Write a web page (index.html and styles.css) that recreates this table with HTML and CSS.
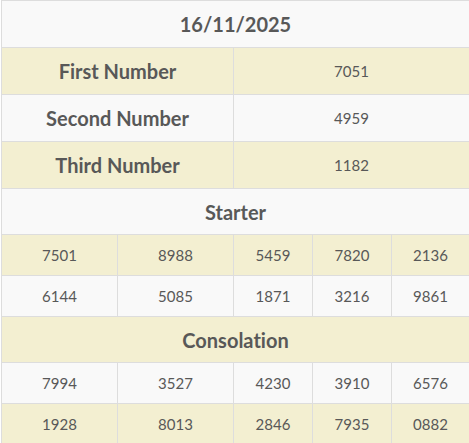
FILE: index.html
```html
<!DOCTYPE html>
<html>
<head>
<meta charset="utf-8">
<link rel="stylesheet" href="styles.css">
</head>
<body>
<div class="results">
  <div class="cell title span5 white">16/11/2025</div>

  <div class="cell label span2 beige">First Number</div>
  <div class="cell value span3 beige">7051</div>

  <div class="cell label span2 white">Second Number</div>
  <div class="cell value span3 white">4959</div>

  <div class="cell label span2 beige">Third Number</div>
  <div class="cell value span3 beige">1182</div>

  <div class="cell section span5 white">Starter</div>

  <div class="cell num beige">7501</div>
  <div class="cell num beige">8988</div>
  <div class="cell num beige">5459</div>
  <div class="cell num beige">7820</div>
  <div class="cell num beige">2136</div>

  <div class="cell num white">6144</div>
  <div class="cell num white">5085</div>
  <div class="cell num white">1871</div>
  <div class="cell num white">3216</div>
  <div class="cell num white">9861</div>

  <div class="cell section span5 beige">Consolation</div>

  <div class="cell num white">7994</div>
  <div class="cell num white">3527</div>
  <div class="cell num white">4230</div>
  <div class="cell num white">3910</div>
  <div class="cell num white">6576</div>

  <div class="cell num beige">1928</div>
  <div class="cell num beige">8013</div>
  <div class="cell num beige">2846</div>
  <div class="cell num beige">7935</div>
  <div class="cell num beige">0882</div>
</div>
</body>
</html>
```
FILE: styles.css
```css
html, body {
  margin: 0;
  padding: 0;
  background: #ffffff;
  overflow: hidden;
}

body {
  font-family: Lato, "Open Sans", sans-serif;
  color: #585858;
  font-variant-ligatures: none;
}

.results {
  display: grid;
  grid-template-columns: 116px 116px 79px 79px 78px;
  margin-left: 1px;
  width: 469px;
  border-left: 1px solid #dddddd;
  border-top: 1px solid #dddddd;
  box-sizing: border-box;
}

.cell {
  box-sizing: border-box;
  border-right: 1px solid #dddddd;
  border-bottom: 1px solid #dddddd;
  display: flex;
  align-items: center;
  justify-content: center;
}

.white { background: #f9f9f9; }
.beige { background: #f3efd1; }

.span2 { grid-column: span 2; }
.span3 { grid-column: span 3; }
.span5 { grid-column: span 5; }

.title {
  height: 47px;
  font-size: 20px;
  font-weight: 700;
}

.label {
  height: 47px;
  font-size: 20px;
  font-weight: 700;
}

.value {
  height: 47px;
  font-size: 15px;
}

.section {
  height: 46px;
  font-size: 20px;
  font-weight: 700;
}

.num {
  height: 41px;
  font-size: 15px;
}
```
